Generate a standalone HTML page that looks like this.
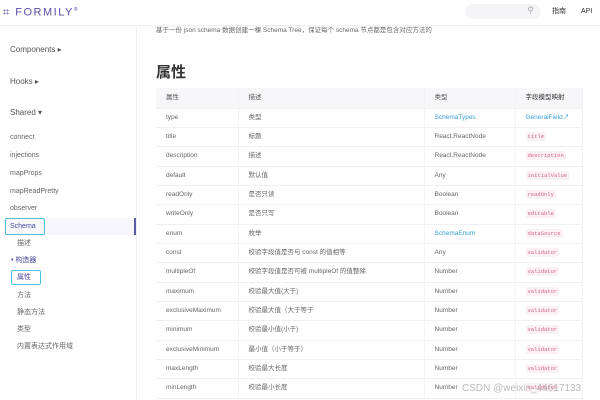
<!DOCTYPE html>
<html><head><meta charset="utf-8"><style>
*{margin:0;padding:0;box-sizing:border-box}
body{width:600px;height:400px;overflow:hidden;background:#fff;font-family:"Liberation Sans","Noto Sans CJK SC",sans-serif;color:#555;position:relative}
.hdr{position:absolute;left:0;top:0;width:600px;height:26px;border-bottom:1px solid #f0f0f0;box-shadow:0 1px 3px rgba(0,0,0,.04);background:#fff}
.logo{position:absolute;left:3px;top:4px;font-size:11px;color:#5b4ea8;letter-spacing:1.5px;font-weight:normal;line-height:12px}
.search{position:absolute;left:465px;top:4px;width:76px;height:15px;border-radius:8px;background:#f5f5f7}
.abs{position:absolute;white-space:nowrap;line-height:1}
.side{position:absolute;left:0;top:27px;width:137px;height:373px;border-right:1px solid #f0f0f0}
.s{position:absolute;font-size:7px;color:#666;white-space:nowrap;line-height:1}
.g{font-size:8px;color:#555}
table{position:absolute;left:156px;top:88px;border-collapse:collapse;font-size:6.5px;color:#666;line-height:8px}
td,th{height:19.35px;padding:0 0 0 10px;border-bottom:1px solid #f0f0f0;border-right:1px solid #f3f3f3;text-align:left;white-space:nowrap;vertical-align:middle}
th{background:#f7f7f9;font-weight:normal;color:#555;height:20px}
.c{font-family:"Liberation Mono",monospace;font-size:5.5px;color:#d9668a;background:#fbf1f4;padding:1px 2px;border-radius:2px}
.b{color:#3aa0d8}
</style></head><body>
<div class="hdr">
<div class="logo">⌗ FORMILY<sup style="font-size:5px">®</sup></div>
<div class="search"><span style="position:absolute;right:7px;top:1px;font-size:9px;color:#aaa">⚲</span></div>
<div class="abs" style="left:552px;top:8px;font-size:7px;color:#333">指南</div>
<div class="abs" style="left:581px;top:8px;font-size:7px;color:#333">API</div>
</div>
<div class="side"></div>
<div class="s g" style="left:10px;top:46px">Components ▸</div>
<div class="s g" style="left:10px;top:78px">Hooks ▸</div>
<div class="s g" style="left:10px;top:109px">Shared ▾</div>
<div class="s" style="left:10px;top:134px">connect</div>
<div class="s" style="left:10px;top:152px">injections</div>
<div class="s" style="left:10px;top:170px">mapProps</div>
<div class="s" style="left:10px;top:188px">mapReadPretty</div>
<div class="s" style="left:10px;top:205px">observer</div>
<div class="abs" style="left:4px;top:218px;width:132px;height:17px;background:#f6f6fb"></div>
<div class="abs" style="left:134px;top:218px;width:2px;height:17px;background:#5a5aa8"></div>
<div class="abs" style="left:5px;top:218px;width:40px;height:17px;border:1.5px solid #4cc3d6;border-radius:2px"></div>
<div class="s" style="left:10px;top:223px;color:#4a4aa0">Schema</div>
<div class="s" style="left:17px;top:240px">描述</div>
<div class="s" style="left:11px;top:257px;color:#4a4aa0">• 构造器</div>
<div class="abs" style="left:11px;top:270px;width:30px;height:15px;border:1.5px solid #4cc3d6;border-radius:2px"></div>
<div class="s" style="left:17px;top:274px;color:#4a4aa0">属性</div>
<div class="s" style="left:17px;top:292px">方法</div>
<div class="s" style="left:17px;top:309px">静态方法</div>
<div class="s" style="left:17px;top:326px">类型</div>
<div class="s" style="left:17px;top:343px">内置表达式作用域</div>
<div class="abs" style="left:156px;top:28px;font-size:6.5px;color:#666">基于一份 json schema 数据创建一棵 Schema Tree，保证每个 schema 节点都是包含对应方法的</div>
<div class="abs" style="left:156px;top:65px;font-size:15px;font-weight:bold;color:#333">属性</div>
<table>
<tr><th style="width:82px">属性</th><th style="width:186px">描述</th><th style="width:91px">类型</th><th style="width:67px;color:#333">字段模型映射</th></tr>
<tr><td>type</td><td>类型</td><td class="b">SchemaTypes</td><td class="b">GeneralField↗</td></tr>
<tr><td>title</td><td>标题</td><td>React.ReactNode</td><td><span class="c">title</span></td></tr>
<tr><td>description</td><td>描述</td><td>React.ReactNode</td><td><span class="c">description</span></td></tr>
<tr><td>default</td><td>默认值</td><td>Any</td><td><span class="c">initialValue</span></td></tr>
<tr><td>readOnly</td><td>是否只读</td><td>Boolean</td><td><span class="c">readOnly</span></td></tr>
<tr><td>writeOnly</td><td>是否只写</td><td>Boolean</td><td><span class="c">editable</span></td></tr>
<tr><td>enum</td><td>枚举</td><td class="b">SchemaEnum</td><td><span class="c">dataSource</span></td></tr>
<tr><td>const</td><td>校验字段值是否与 const 的值相等</td><td>Any</td><td><span class="c">validator</span></td></tr>
<tr><td>multipleOf</td><td>校验字段值是否可被 multipleOf 的值整除</td><td>Number</td><td><span class="c">validator</span></td></tr>
<tr><td>maximum</td><td>校验最大值(大于)</td><td>Number</td><td><span class="c">validator</span></td></tr>
<tr><td>exclusiveMaximum</td><td>校验最大值（大于等于</td><td>Number</td><td><span class="c">validator</span></td></tr>
<tr><td>minimum</td><td>校验最小值(小于)</td><td>Number</td><td><span class="c">validator</span></td></tr>
<tr><td>exclusiveMinimum</td><td>最小值（小于等于）</td><td>Number</td><td><span class="c">validator</span></td></tr>
<tr><td>maxLength</td><td>校验最大长度</td><td>Number</td><td><span class="c">validator</span></td></tr>
<tr><td>minLength</td><td>校验最小长度</td><td>Number</td><td><span class="c">validator</span></td></tr>
</table>
<div class="abs" style="left:462px;top:384px;font-size:10px;color:rgba(170,170,170,.8)">CSDN @weixin_44617133</div>
</body></html>
